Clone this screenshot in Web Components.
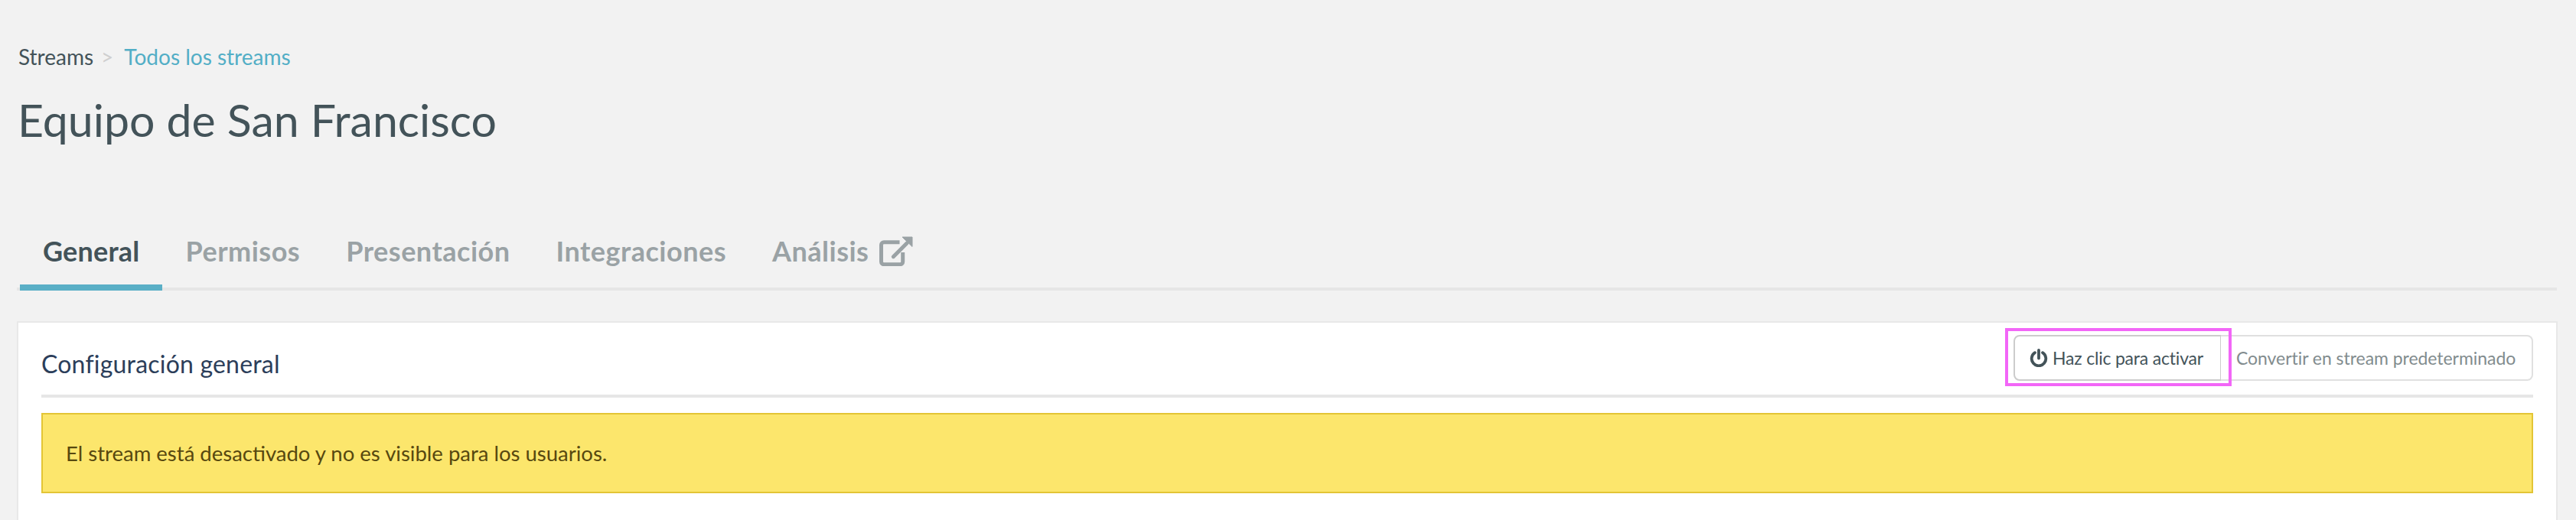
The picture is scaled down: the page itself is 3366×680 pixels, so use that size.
<!DOCTYPE html>
<html lang="es">
<head>
<meta charset="utf-8">
<title>Equipo de San Francisco</title>
<style>
  html, body { margin: 0; height: 100%; }
  body {
    background: #f2f2f2;
    color: #435359;
    font-family: Lato, "Open Sans", sans-serif;
    overflow: hidden;
  }
</style>
</head>
<body>
<stream-page>
  <page-header slot="header" crumb="Streams" link="Todos los streams" title="Equipo de San Francisco"></page-header>
  <tab-bar slot="tabs">
    <tab-item active>General</tab-item>
    <tab-item>Permisos</tab-item>
    <tab-item>Presentación</tab-item>
    <tab-item>Integraciones</tab-item>
    <tab-item external>Análisis</tab-item>
  </tab-bar>
  <settings-card slot="card" heading="Configuración general">
    <button-pair slot="actions"></button-pair>
    <alert-banner>El stream está desactivado y no es visible para los usuarios.</alert-banner>
  </settings-card>
</stream-page>
<script>
// stream settings page, one element per block
class StreamPage extends HTMLElement {
  constructor() {
    super();
    const shadow = this.attachShadow({ mode: "open" });
    shadow.innerHTML = `
      <style>
        :host { display: block; }
        .head { padding: 61px 24px 0 24px; }
        .tabs { padding: 97px 25px 0 22px; }
        .card { padding: 40px 24px 0 22px; }
      </style>
      <div class="head"><slot name="header"></slot></div>
      <div class="tabs"><slot name="tabs"></slot></div>
      <div class="card"><slot name="card"></slot></div>
    `;
  }
}

class PageHeader extends HTMLElement {
  constructor() {
    super();
    const shadow = this.attachShadow({ mode: "open" });
    shadow.innerHTML = `
      <style>
        :host { display: block; }
        .crumbs {
          display: flex;
          align-items: baseline;
          font-size: 28px;
          line-height: 26px;
        }
        .sep { color: #cfcfcf; margin: 0 14px 0 10px; }
        .link { color: #52aec6; }
        h1 {
          margin: 40px 0 0 -1px;
          font-size: 59px;
          line-height: 60px;
          font-weight: 400;
          color: #435359;
        }
      </style>
      <div class="crumbs">
        <span class="crumb"></span><span class="sep">&gt;</span><span class="link"></span>
      </div>
      <h1></h1>
    `;
    shadow.querySelector(".crumb").textContent = this.getAttribute("crumb");
    shadow.querySelector(".link").textContent = this.getAttribute("link");
    shadow.querySelector("h1").textContent = this.getAttribute("title");
  }
}

class TabBar extends HTMLElement {
  constructor() {
    super();
    const shadow = this.attachShadow({ mode: "open" });
    shadow.innerHTML = `
      <style>
        :host {
          display: flex;
          padding-left: 4px;
          border-bottom: 4px solid #e6e6e6;
        }
      </style>
      <slot></slot>
    `;
  }
}

class TabItem extends HTMLElement {
  constructor() {
    super();
    const shadow = this.attachShadow({ mode: "open" });
    const icon = this.hasAttribute("external")
      ? `<svg viewBox="0 0 44 39" width="44" height="39" aria-hidden="true">
           <path d="M26.5 7.7H6a3.5 3.5 0 0 0-3.5 3.5v22a3.5 3.5 0 0 0 3.5 3.5h21.2a3.5 3.5 0 0 0 3.5-3.5V21" fill="none" stroke="currentColor" stroke-width="5"/>
           <path d="M18.3 26.7L36 9" fill="none" stroke="currentColor" stroke-width="5" stroke-linecap="round"/>
           <path d="M30 1H43V13.5Z" fill="currentColor" stroke="currentColor" stroke-width="1" stroke-linejoin="round"/>
         </svg>`
      : "";
    shadow.innerHTML = `
      <style>
        :host {
          display: flex;
          align-items: center;
          gap: 14px;
          height: 88px;
          padding: 0 30px;
          margin-bottom: -4px;
          font-size: 36px;
          font-weight: 700;
          letter-spacing: 0.5px;
          color: #9aa2a5;
          border-bottom: 8px solid transparent;
        }
        :host([active]) {
          color: #435359;
          letter-spacing: 0.2px;
          border-bottom-color: #5aafc6;
        }
      </style>
      <span><slot></slot></span>${icon}
    `;
  }
}

class SettingsCard extends HTMLElement {
  constructor() {
    super();
    const shadow = this.attachShadow({ mode: "open" });
    shadow.innerHTML = `
      <style>
        :host {
          display: block;
          background: #fff;
          border: 2px solid #e8e8e8;
          border-bottom: 0;
          padding: 16px 30px 60px 30px;
        }
        .top {
          display: flex;
          align-items: center;
          justify-content: space-between;
          padding-bottom: 18px;
          border-bottom: 4px solid #e6e6e6;
        }
        h2 {
          margin: 0;
          padding-top: 14px;
          font-size: 32px;
          font-weight: 400;
          color: #2c3e5a;
          letter-spacing: 0.2px;
        }
        .body { padding-top: 20px; }
      </style>
      <div class="top">
        <h2></h2>
        <slot name="actions"></slot>
      </div>
      <div class="body"><slot></slot></div>
    `;
    shadow.querySelector("h2").textContent = this.getAttribute("heading");
  }
}

class ButtonPair extends HTMLElement {
  constructor() {
    super();
    const shadow = this.attachShadow({ mode: "open" });
    shadow.innerHTML = `
      <style>
        :host { display: flex; position: relative; font-size: 23px; }
        button {
          box-sizing: border-box;
          height: 60px;
          background: #fff;
          font: inherit;
          display: flex;
          align-items: center;
          white-space: nowrap;
        }
        .on {
          gap: 6px;
          width: 272px;
          padding: 0 0 0 19px;
          color: #435359;
          letter-spacing: -0.2px;
          border: 2px solid #ccc;
          border-radius: 8px 0 0 8px;
        }
        .on svg { flex: none; }
        .off {
          width: 408px;
          margin-left: -1px;
          padding: 0 0 0 20px;
          color: #828c8e;
          letter-spacing: -0.05px;
          border: 2px solid #e0e0e0;
          border-left: 0;
          border-radius: 0 8px 8px 0;
        }
        /* pink annotation over the first button */
        .mark {
          position: absolute;
          left: -11px;
          top: -9px;
          width: 296px;
          height: 76px;
          box-sizing: border-box;
          border: 4px solid #f266f7;
          pointer-events: none;
        }
      </style>
      <button class="on">
        <svg viewBox="0 0 24 24" width="24" height="24" aria-hidden="true">
          <path d="M7 5.16A9.3 9.3 0 1 0 17 5.16" fill="none" stroke="currentColor" stroke-width="3.8" stroke-linecap="round"/>
          <path d="M12 1.9v10.6" fill="none" stroke="currentColor" stroke-width="3.8" stroke-linecap="round"/>
        </svg>
        <span>Haz clic para activar</span>
      </button>
      <button class="off">Convertir en stream predeterminado</button>
      <div class="mark"></div>
    `;
  }
}

class AlertBanner extends HTMLElement {
  constructor() {
    super();
    const shadow = this.attachShadow({ mode: "open" });
    shadow.innerHTML = `
      <style>
        :host {
          display: block;
          box-sizing: border-box;
          height: 105px;
          padding: 0 30px;
          line-height: 101px;
          font-size: 27.5px;
          color: #57480f;
          background: #fce66c;
          border: 2px solid #e3c535;
        }
      </style>
      <slot></slot>
    `;
  }
}

customElements.define("stream-page", StreamPage);
customElements.define("page-header", PageHeader);
customElements.define("tab-bar", TabBar);
customElements.define("tab-item", TabItem);
customElements.define("settings-card", SettingsCard);
customElements.define("button-pair", ButtonPair);
customElements.define("alert-banner", AlertBanner);
</script>
</body>
</html>
